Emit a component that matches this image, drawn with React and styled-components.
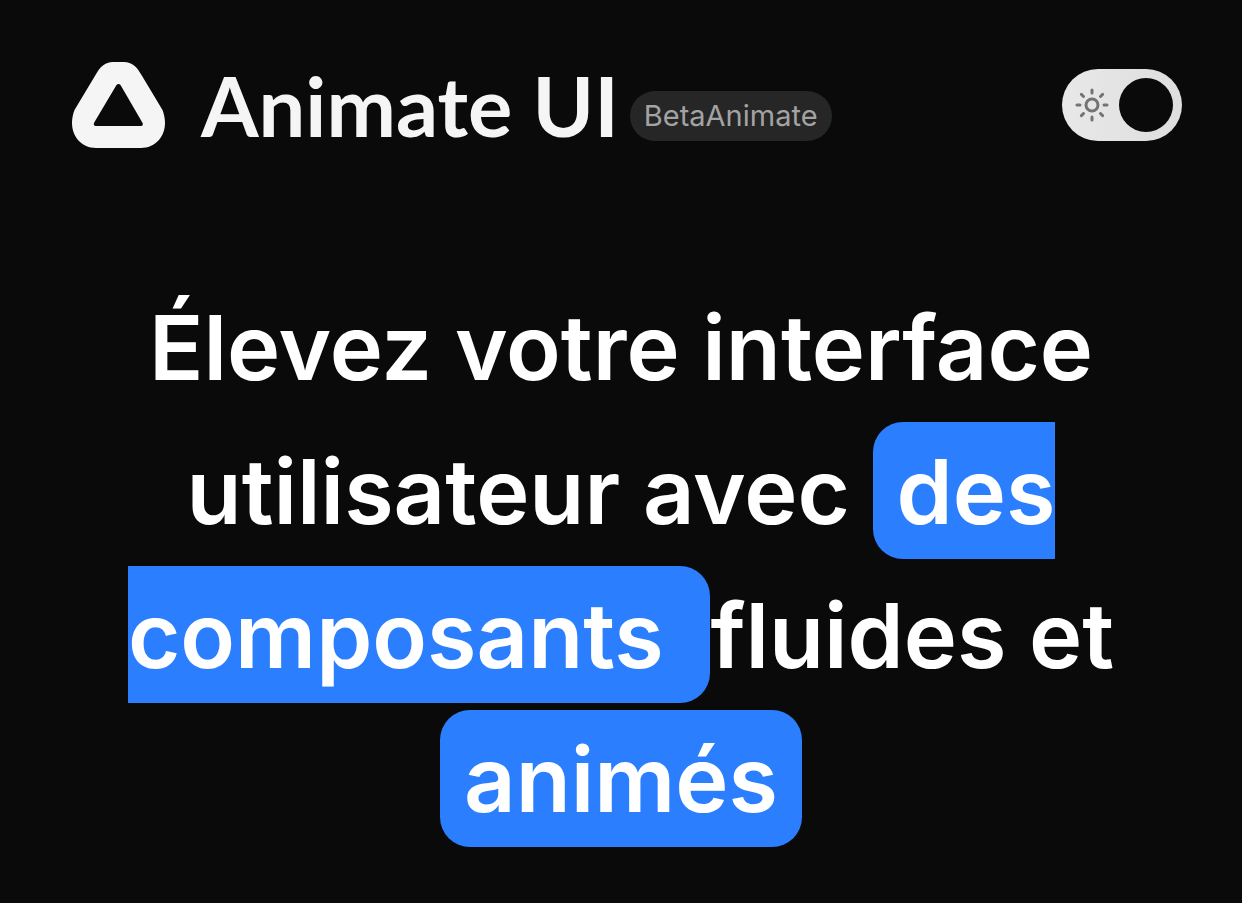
import React, { useState } from "react";
import styled, { createGlobalStyle } from "styled-components";

const GlobalStyle = createGlobalStyle`
  *, *::before, *::after { box-sizing: border-box; }
  body {
    margin: 0;
    background: #0a0a0a;
    color: #ffffff;
    font-family: Inter, "Liberation Sans", sans-serif;
  }
`;

const Page = styled.div`
  min-height: 100vh;
  padding: 60px 60px 48px;
`;

const Header = styled.header`
  display: flex;
  align-items: center;
  justify-content: space-between;
  height: 90px;
  padding-left: 12px;
`;

const Brand = styled.a`
  display: flex;
  align-items: center;
  color: #f5f5f5;
  text-decoration: none;
`;

const LogoMark = styled.svg`
  flex: none;
  width: 93px;
  height: 86px;
  margin-right: 36px;
`;

const Wordmark = styled.span`
  font-family: Lato, sans-serif;
  font-size: 83px;
  font-weight: 700;
  line-height: 90px;
  white-space: nowrap;
`;

const Badge = styled.span`
  align-self: flex-end;
  height: 50px;
  margin: 0 0 9px 11px;
  padding: 0 14px;
  border-radius: 25px;
  background: #262626;
  color: #a3a3a3;
  font-size: 29px;
  line-height: 50px;
`;

const Switch = styled.label`
  position: relative;
  display: flex;
  flex: none;
  align-items: center;
  justify-content: space-between;
  flex-direction: ${(p) => (p.$on ? "row" : "row-reverse")};
  width: 120px;
  height: 72px;
  padding: 9px 9px 9px 12px;
  border-radius: 36px;
  background: linear-gradient(90deg, #e8e8e8, #dedede);
  cursor: pointer;
`;

const SwitchInput = styled.input`
  position: absolute;
  inset: 0;
  width: 100%;
  height: 100%;
  margin: 0;
  opacity: 0;
  cursor: pointer;
`;

const Thumb = styled.span`
  width: 54px;
  height: 54px;
  border-radius: 50%;
  background: #0a0a0a;
`;

const SunIcon = styled.svg`
  width: 36px;
  height: 36px;
  fill: none;
  stroke: #737373;
  stroke-width: 2;
  stroke-linecap: round;
`;

const Hero = styled.main`
  padding-top: 126px;
`;

const Title = styled.h1`
  margin: 0;
  font-size: 90px;
  font-weight: 600;
  line-height: 144px;
  text-align: center;
`;

const Highlight = styled.span`
  padding: 15px 24px 13px;
  border-radius: 30px;
  background: #2b7fff;
`;

export default function App() {
  const [on, setOn] = useState(true);
  return (
    <Page>
      <GlobalStyle />
      <Header>
        <Brand href="#">
          <LogoMark viewBox="0 0 93 86" aria-hidden="true">
            <path
              fill="currentColor"
              fillRule="evenodd"
              d="M41 0H52C60 0 65 5 69.500 13L90.500 48C92 52 93 56 93 61C93 75 83 86 69 86H24C10 86 0 75 0 61C0 56 1 52 2.500 48L23.500 13C28 5 33 0 41 0ZM44.500 23L22.500 60C21 62.500 22 64 24.500 64H68.500C71 64 71.500 62 70 60L48.500 23C47.500 21.500 45.500 21.500 44.500 23Z"
            />
          </LogoMark>
          <Wordmark>Animate UI</Wordmark>
          <Badge>BetaAnimate</Badge>
        </Brand>
        <Switch $on={on}>
          <SwitchInput
            type="checkbox"
            role="switch"
            aria-label="Animate"
            checked={on}
            onChange={(e) => setOn(e.target.checked)}
          />
          <SunIcon viewBox="0 0 24 24" aria-hidden="true">
            <circle cx="12" cy="12" r="4" />
            <path d="M12 2v2M12 20v2M4.930 4.930l1.410 1.410M17.660 17.660l1.410 1.410M2 12h2M20 12h2M6.340 17.660l-1.410 1.410M19.070 4.930l-1.410 1.410" />
          </SunIcon>
          <Thumb />
        </Switch>
      </Header>
      <Hero>
        <Title>
          Élevez votre interface utilisateur avec{" "}
          <Highlight>des composants&nbsp;</Highlight>fluides et{" "}
          <Highlight>animés</Highlight>
        </Title>
      </Hero>
    </Page>
  );
}
